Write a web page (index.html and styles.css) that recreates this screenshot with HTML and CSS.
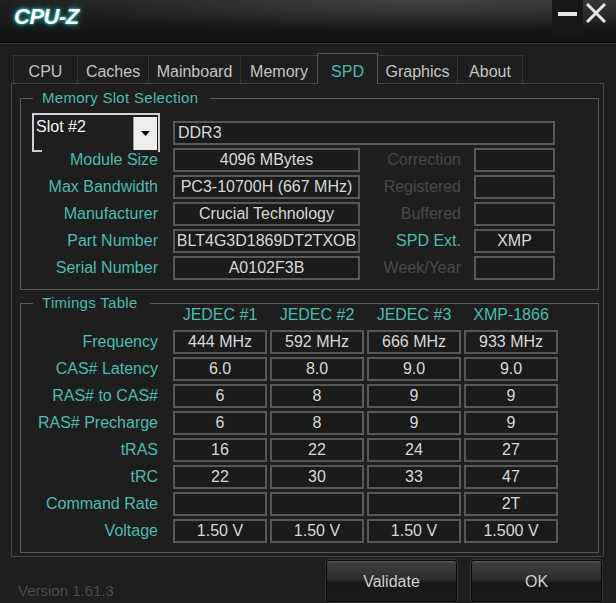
FILE: index.html
```html
<!DOCTYPE html>
<html>
	<head>
		<meta charset="UTF-8">
		<title>CPU-Z</title>
		<link rel="stylesheet" href="styles.css">
	</head>
	<body>
		<div class="titlebar">
			<div class="logo">CPU-Z</div>
			<div class="controls">
				<div class="ctl-min"><span></span></div>
				<div class="ctl-close">
					<svg width="22" height="20" viewBox="0 0 22 20"><path d="M2 1 L20 19 M20 1 L2 19" stroke="#e4e4e4" stroke-width="3" fill="none"/></svg>
				</div>
			</div>
		</div>

		<ul class="tabs">
			<li class="t-cpu">CPU</li>
			<li class="t-caches">Caches</li>
			<li class="t-main">Mainboard</li>
			<li class="t-mem">Memory</li>
			<li class="t-spd active">SPD</li>
			<li class="t-gfx">Graphics</li>
			<li class="t-about">About</li>
		</ul>

		<div class="panel">
			<fieldset class="group slot">
				<legend>Memory Slot Selection</legend>
				<div class="slot-grid">
					<div class="combo">
						<span class="combo-text">Slot #2</span>
						<span class="combo-btn">
							<svg width="9" height="5" viewBox="0 0 9 5"><polygon points="0,0 9,0 4.5,5" fill="#000"/></svg>
						</span>
					</div>
					<div class="field wide left type">DDR3</div>

					<label>Module Size</label>
					<div class="field">4096 MBytes</div>
					<label class="off">Correction</label>
					<div class="field"></div>

					<label>Max Bandwidth</label>
					<div class="field">PC3-10700H (667 MHz)</div>
					<label class="off">Registered</label>
					<div class="field"></div>

					<label>Manufacturer</label>
					<div class="field">Crucial Technology</div>
					<label class="off">Buffered</label>
					<div class="field"></div>

					<label>Part Number</label>
					<div class="field">BLT4G3D1869DT2TXOB</div>
					<label class="mid">SPD Ext.</label>
					<div class="field">XMP</div>

					<label>Serial Number</label>
					<div class="field">A0102F3B</div>
					<label class="off">Week/Year</label>
					<div class="field"></div>
				</div>
			</fieldset>

			<fieldset class="group timings">
				<legend>Timings Table</legend>
				<div class="t-grid">
					<span></span>
					<span class="th">JEDEC #1</span>
					<span class="th">JEDEC #2</span>
					<span class="th">JEDEC #3</span>
					<span class="th">XMP-1866</span>

					<label>Frequency</label>
					<div class="field">444 MHz</div>
					<div class="field">592 MHz</div>
					<div class="field">666 MHz</div>
					<div class="field">933 MHz</div>

					<label>CAS# Latency</label>
					<div class="field">6.0</div>
					<div class="field">8.0</div>
					<div class="field">9.0</div>
					<div class="field">9.0</div>

					<label>RAS# to CAS#</label>
					<div class="field">6</div>
					<div class="field">8</div>
					<div class="field">9</div>
					<div class="field">9</div>

					<label>RAS# Precharge</label>
					<div class="field">6</div>
					<div class="field">8</div>
					<div class="field">9</div>
					<div class="field">9</div>

					<label>tRAS</label>
					<div class="field">16</div>
					<div class="field">22</div>
					<div class="field">24</div>
					<div class="field">27</div>

					<label>tRC</label>
					<div class="field">22</div>
					<div class="field">30</div>
					<div class="field">33</div>
					<div class="field">47</div>

					<label>Command Rate</label>
					<div class="field"></div>
					<div class="field"></div>
					<div class="field"></div>
					<div class="field">2T</div>

					<label>Voltage</label>
					<div class="field">1.50 V</div>
					<div class="field">1.50 V</div>
					<div class="field">1.50 V</div>
					<div class="field">1.500 V</div>
				</div>
			</fieldset>
		</div>

		<div class="footer">
			<span class="version">Version 1.61.3</span>
			<div class="buttons">
				<button>Validate</button>
				<button>OK</button>
			</div>
		</div>
	</body>
</html>
```

FILE: styles.css
```css
*{
	margin: 0;
	padding: 0;
	box-sizing: border-box;
}
ul,li{
	list-style-type: none;
}
body{
	width: 616px;
	height: 603px;
	overflow: hidden;
	background: #1e1e1e;
	font-family: "Liberation Sans", Arial, sans-serif;
	font-size: 16px;
	color: #d4d4d4;
}

/* title bar */
.titlebar{
	height: 43px;
	display: flex;
	align-items: flex-start;
	border-bottom: 1px solid #060606;
	box-shadow: 0 1px 0 #363636;
	background: radial-gradient(ellipse 430px 30px at 70% 0, #444 0%, #313131 45%, rgba(40,40,40,0) 100%), linear-gradient(#202020, #121212);
}
.logo{
	margin: 4px 0 0 14px;
	font-size: 22px;
	font-weight: bold;
	font-style: italic;
	letter-spacing: -0.5px;
	color: #fff;
	text-shadow: 0 0 3px #3be0e0, 0 0 7px #17a8a8;
}
.controls{
	margin-left: auto;
	display: flex;
	height: 36px;
}
.ctl-min{
	width: 31px;
	background: #171717;
	display: flex;
	justify-content: center;
	padding-top: 12px;
}
.ctl-min span{
	width: 19px;
	height: 4px;
	background: #e6e6e6;
}
.ctl-close{
	width: 33px;
	padding: 3px 0 0 2px;
}

/* tabs */
.tabs{
	height: 40px;
	margin-left: 13px;
	display: flex;
	align-items: flex-end;
}
.tabs li{
	height: 28px;
	padding-top: 6px;
	line-height: 20px;
	text-align: center;
	color: #c4c4c4;
	border-top: 1px solid #383838;
	border-left: 1px solid #383838;
}
.t-cpu{ width: 64px; }
.t-caches{ width: 71px; }
.t-main{ width: 92px; }
.t-mem{ width: 77px; }
.t-spd{ width: 61px; }
.t-gfx{ width: 79px; }
.t-about{ width: 66px; border-right: 1px solid #383838; }
.tabs li.active{
	position: relative;
	z-index: 1;
	height: 31px;
	padding-top: 8px;
	margin-bottom: -1px;
	color: #4cbcae;
	background: #1e1e1e;
	border: 1px solid #555;
	border-bottom: none;
}
.tabs li.active + li{
	border-left: none;
}

/* panel + group boxes */
.panel{
	margin: 0 12px 0 11px;
	border: 1px solid #464646;
}
.group{
	border: 1px solid #5a5a5a;
	margin: 8px 4px 0 8px;
	padding: 9px 0 9px;
}
.group legend{
	margin-left: 12px;
	padding: 0 12px 0 9px;
	font-size: 15px;
	line-height: 12px;
	letter-spacing: 0.3px;
	color: #4cbcae;
}
.timings{
	margin: 7px 4px 3px 8px;
	padding: 0 0 9px;
}
label{
	text-align: right;
	color: #4cbcae;
	white-space: nowrap;
}
.field{
	height: 24px;
	border: 2px solid #585858;
	background: #1b1b1b;
	line-height: 20px;
	text-align: center;
	color: #d8d8d8;
	white-space: nowrap;
	overflow: hidden;
}
.field.left{
	text-align: left;
	padding-left: 3px;
}

/* memory slot selection */
.slot-grid{
	display: grid;
	grid-template-columns: 152px 187px 114px 81px;
	grid-template-rows: 32px repeat(5, 24px);
	row-gap: 3px;
	align-items: center;
}
.slot-grid label{
	padding-right: 15px;
}
.slot-grid label.off,
.slot-grid label.mid{
	padding-right: 13px;
}
.slot-grid label.off{
	color: #4a4a4a;
}
.field.wide{
	grid-column: 2 / 5;
	align-self: end;
}
.combo{
	align-self: start;
	width: 128px;
	height: 39px;
	margin-left: 11px;
	display: flex;
	align-items: flex-start;
	border: 2px solid #cfcfcf;
	border-bottom: none;
	background: linear-gradient(#cfcfcf, #cfcfcf) no-repeat left bottom / 10px 2px, #1e1e1e;
	background-origin: border-box;
}
.combo-text{
	padding: 2px 0 0 2px;
	line-height: 20px;
	color: #f2f2f2;
}
.combo-btn{
	margin: 2px 1px 0 auto;
	width: 24px;
	height: 33px;
	background: #eeeeee;
	border-left: 1px solid #9a9a9a;
	display: flex;
	align-items: center;
	justify-content: center;
}

/* timings */
.t-grid{
	display: grid;
	grid-template-columns: 149px repeat(4, 94px);
	grid-template-rows: 18px repeat(8, 24px);
	column-gap: 3px;
	row-gap: 3px;
	align-items: center;
}
.t-grid label{
	padding-right: 12px;
}
.th{
	align-self: start;
	line-height: 12px;
	text-align: center;
	color: #4cbcae;
}

/* footer */
.footer{
	display: flex;
	align-items: flex-start;
	padding: 3px 14px 0 18px;
}
.version{
	margin-top: 22px;
	font-size: 15px;
	line-height: 18px;
	color: #4d4d4d;
}
.buttons{
	margin-left: auto;
	display: flex;
	gap: 14px;
}
.buttons button{
	width: 131px;
	height: 42px;
	padding-top: 1px;
	border: 1px solid #0a0a0a;
	border-radius: 3px;
	background: linear-gradient(#434343, #2c2c2c 45%, #171717 55%, #1b1b1b);
	box-shadow: inset 0 1px 0 #5a5a5a, 0 0 0 1px #353535;
	font-family: "Liberation Sans", Arial, sans-serif;
	font-size: 16px;
	color: #d0d0d0;
}
```
